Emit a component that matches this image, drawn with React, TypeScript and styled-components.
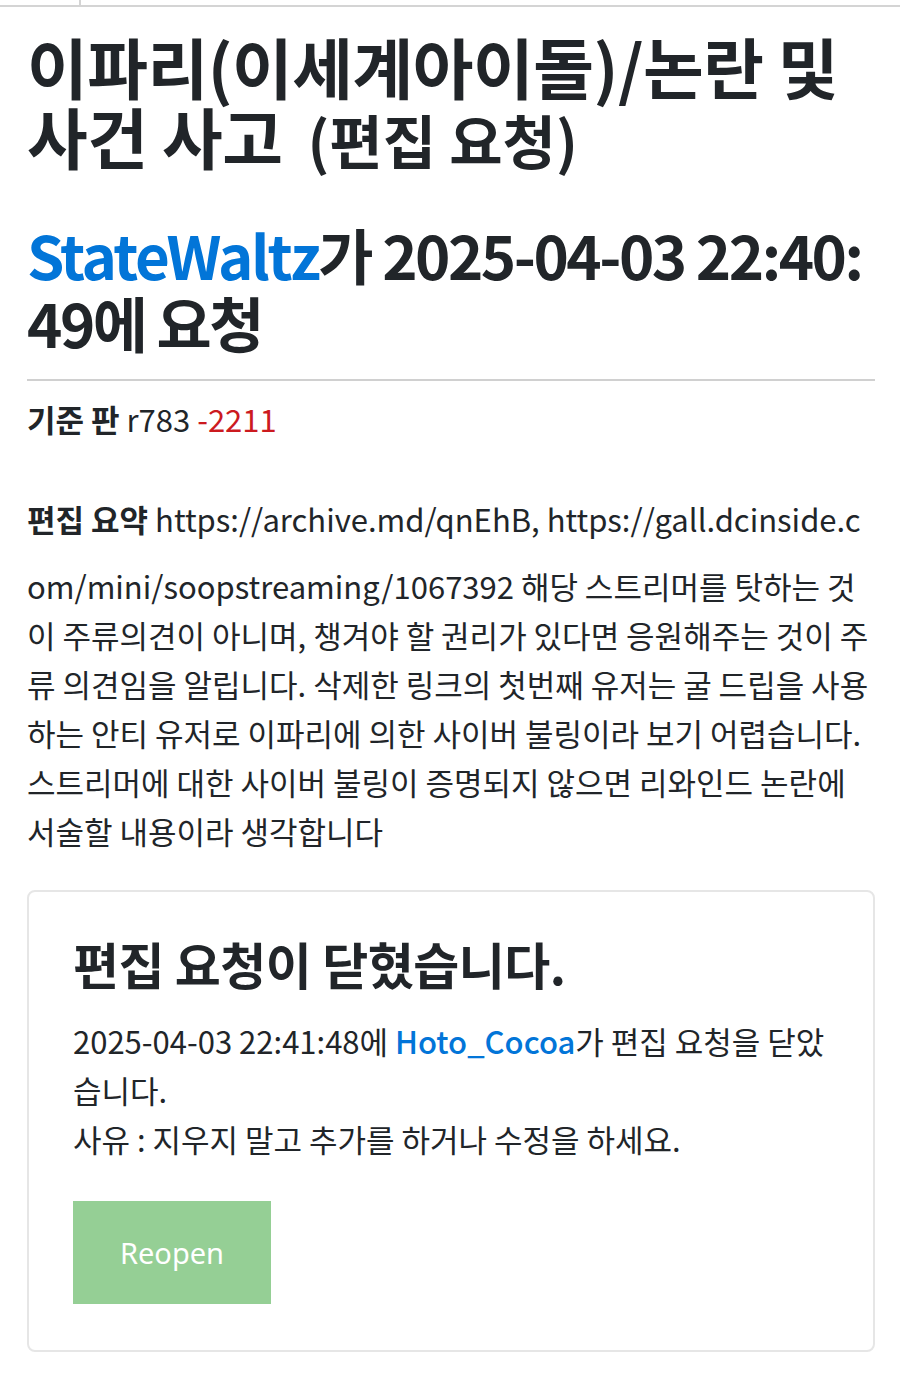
import React from "react";
import styled, { createGlobalStyle } from "styled-components";

const GlobalStyle = createGlobalStyle`
  html, body {
    margin: 0;
    padding: 0;
    background: #fff;
  }
  body {
    font-family: "Noto Sans CJK KR", "Noto Sans", sans-serif;
    color: #212529;
  }
`;

const TopBar = styled.div`
  height: 5px;
  border-bottom: 2px solid #d4d4d4;
  display: flex;
`;

const TopTab = styled.div`
  width: 79px;
  border-right: 2px solid #d4d4d4;
`;

const Page = styled.main`
  padding: 23px 25px 20px 27px;
`;

const Title = styled.h1`
  margin: 0;
  font-size: 66px;
  line-height: 70px;
  font-weight: 700;
  letter-spacing: -0.5px;
`;

const TitleSub = styled.small`
  font-size: 58px;
  letter-spacing: 0;
  margin-left: 25px;
`;

const Subtitle = styled.h2`
  margin: 46px 0 0;
  font-size: 60px;
  line-height: 68px;
  font-weight: 700;
  letter-spacing: -2.5px;
  word-break: break-all;
`;

const UserLink = styled.a<{ $size?: string }>`
  color: #0275d8;
  text-decoration: none;
  font-weight: ${(p) => (p.$size === "sm" ? 500 : 700)};
`;

const Rule = styled.hr`
  border: 0;
  border-top: 2px solid #d0d0d0;
  margin: 23px 0 13px;
`;

const InfoLine = styled.p<{ $gap?: number; $lead?: number }>`
  margin: ${(p) => p.$gap ?? 0}px 0 0;
  font-size: 31px;
  line-height: 49px;
  word-break: break-all;

  &::first-line {
    line-height: ${(p) => p.$lead ?? 49}px;
  }
`;

const Label = styled.strong`
  font-weight: 700;
`;

const Minus = styled.span`
  color: #cc1a1f;
`;

const ClosedCard = styled.section`
  margin-top: 35px;
  border: 2px solid #e6e6e6;
  border-radius: 8px;
  padding: 36px 44px 46px;
`;

const CardTitle = styled.h3`
  margin: 0;
  font-size: 50px;
  line-height: 70px;
  font-weight: 700;
  letter-spacing: -0.5px;
`;

const CardText = styled.p`
  margin: 18px 0 0;
  font-size: 31px;
  line-height: 49px;
`;

const ReopenButton = styled.button`
  margin-top: 38px;
  width: 198px;
  height: 103px;
  border: 0;
  border-radius: 0;
  background: #95cf95;
  color: #fff;
  font-family: "Noto Sans", "Noto Sans CJK KR", sans-serif;
  font-size: 29px;
  cursor: pointer;
`;

export default function App() {
  return (
    <>
      <GlobalStyle />
      <TopBar>
        <TopTab />
      </TopBar>
      <Page>
        <Title>
          이파리(이세계아이돌)/논란 및 사건 사고
          <TitleSub>(편집 요청)</TitleSub>
        </Title>
        <Subtitle>
          <UserLink href="#">StateWaltz</UserLink>가 2025-04-03 22:40:49에 요청
        </Subtitle>
        <Rule />
        <InfoLine>
          <Label>기준 판</Label> r783 <Minus>-2211</Minus>
        </InfoLine>
        <InfoLine $gap={33} $lead={85}>
          <Label>편집 요약</Label> https://archive.md/qnEhB, https://gall.dcinside.com/mini/soopstreaming/1067392 해당 스트리머를 탓하는 것이 주류의견이 아니며, 챙겨야 할 권리가 있다면 응원해주는 것이 주류 의견임을 알립니다. 삭제한 링크의 첫번째 유저는 굴 드립을 사용하는 안티 유저로 이파리에 의한 사이버 불링이라 보기 어렵습니다. 스트리머에 대한 사이버 불링이 증명되지 않으면 리와인드 논란에 서술할 내용이라 생각합니다
        </InfoLine>
        <ClosedCard>
          <CardTitle>편집 요청이 닫혔습니다.</CardTitle>
          <CardText>
            2025-04-03 22:41:48에 <UserLink href="#" $size="sm">Hoto_Cocoa</UserLink>가 편집 요청을 닫았습니다.
            <br />
            사유 : 지우지 말고 추가를 하거나 수정을 하세요.
          </CardText>
          <ReopenButton type="button">Reopen</ReopenButton>
        </ClosedCard>
      </Page>
    </>
  );
}
